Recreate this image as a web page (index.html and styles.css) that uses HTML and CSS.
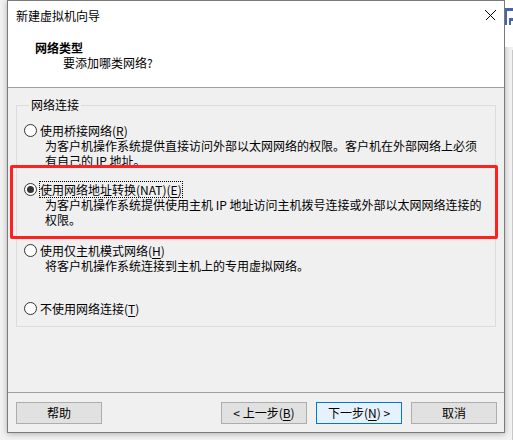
FILE: index.html
```html
<!DOCTYPE html>
<html lang="zh-CN">
<head>
<meta charset="utf-8">
<title>新建虚拟机向导</title>
<link rel="stylesheet" href="styles.css">
</head>
<body>
<div class="desk">
  <div class="window">
    <div class="header">
      <div class="titlebar">
        <span class="title">新建虚拟机向导</span>
        <svg class="close" width="11" height="11" viewBox="0 0 11 11" shape-rendering="crispEdges"><path d="M0.5 0.5L10.5 10.5M10.5 0.5L0.5 10.5" stroke="#000" stroke-width="1" fill="none"/></svg>
      </div>
      <div class="heading">网络类型</div>
      <div class="subheading">要添加哪类网络?</div>
    </div>
    <div class="content">
      <fieldset class="group">
        <legend>网络连接</legend>
        <div class="option o1">
          <div class="row"><span class="radio"></span><span class="label">使用桥接网络(<u>R</u>)</span></div>
          <div class="desc">为客户机操作系统提供直接访问外部以太网网络的权限。客户机在外部网络上必须<br>有自己的 IP 地址。</div>
        </div>
        <div class="option o2">
          <div class="row"><span class="radio checked"></span><span class="label focus">使用网络地址转换(NAT)(<u>E</u>)</span></div>
          <div class="desc">为客户机操作系统提供使用主机 IP 地址访问主机拨号连接或外部以太网网络连接的<br>权限。</div>
        </div>
        <div class="option o3">
          <div class="row"><span class="radio"></span><span class="label">使用仅主机模式网络(<u>H</u>)</span></div>
          <div class="desc">将客户机操作系统连接到主机上的专用虚拟网络。</div>
        </div>
        <div class="option o4">
          <div class="row"><span class="radio"></span><span class="label">不使用网络连接(<u>T</u>)</span></div>
        </div>
      </fieldset>
      <div class="footer">
        <button class="btn help">帮助</button>
        <button class="btn">&lt; 上一步(<u>B</u>)</button>
        <button class="btn default">下一步(<u>N</u>) &gt;</button>
        <button class="btn">取消</button>
      </div>
    </div>
  </div>
  <svg class="side" width="8" height="440" viewBox="0 0 8 440" shape-rendering="crispEdges">
    <rect x="0" y="0" width="8" height="47" fill="#ffffff"/>
    <rect x="0" y="8" width="8" height="3" fill="#4664ad"/>
    <rect x="0" y="8" width="2" height="17" fill="#4664ad"/>
    <rect x="4" y="18" width="4" height="3" fill="#4664ad"/>
    <rect x="4" y="18" width="2" height="7" fill="#4664ad"/>
    <rect x="7" y="50" width="1" height="390" fill="#c8c8c8"/>
  </svg>
  <div class="annot"></div>
</div>
</body>
</html>
```
FILE: styles.css
```css
* { box-sizing: border-box; }
html, body { margin: 0; padding: 0; }
body {
  background: #f2f2f2;
  font-family: "Noto Sans CJK SC", "Noto Sans", sans-serif;
  font-size: 12px;
  color: #000;
  overflow: hidden;
}
.desk {
  position: relative;
  width: 513px;
  height: 440px;
}
.window {
  margin-left: 7px;
  width: 498px;
  height: 433px;
  border: 1px solid #7a7a7a;
  background: #f0f0f0;
  display: flex;
  flex-direction: column;
  box-shadow: 0 1px 6px rgba(0, 0, 0, 0.28);
}
.header {
  height: 87px;
  flex: none;
  background: #fff;
  border-bottom: 1px solid #a0a0a0;
}
.titlebar {
  height: 29px;
  display: flex;
  align-items: center;
  justify-content: space-between;
  padding: 0 8px 0 8px;
  line-height: 29px;
}
.close { display: block; margin-top: -1px; }
.heading {
  margin-top: 10px;
  padding-left: 27px;
  font-weight: bold;
  line-height: 15px;
}
.subheading {
  padding-left: 55px;
  line-height: 15px;
}
.content {
  flex: 1;
  display: flex;
  flex-direction: column;
}
.group {
  margin: 9px 8px 0 8px;
  padding: 10px 0 10px 7px;
  border: 1px solid #dcdcdc;
  min-width: 0;
}
.group legend {
  margin-left: 5px;
  padding: 0 2px;
  line-height: 16px;
}
.option { line-height: 15px; }
.o1 { height: 59px; }
.o2 { height: 61px; }
.o3 { height: 58px; }
.row {
  display: flex;
  align-items: center;
  gap: 3px;
  height: 15px;
}
.radio {
  width: 13px;
  height: 13px;
  flex: none;
  border: 1px solid #333;
  border-radius: 50%;
  background: #fff;
  display: flex;
  align-items: center;
  justify-content: center;
}
.radio.checked::after {
  content: "";
  width: 7px;
  height: 7px;
  border-radius: 50%;
  background: #333;
}
.label { white-space: nowrap; }
.label.focus { outline: 1px dotted #000; outline-offset: 0; }
.desc {
  margin-left: 21px;
  white-space: nowrap;
}
u { text-decoration: underline; text-underline-offset: 2px; }
.footer {
  margin-top: auto;
  flex: none;
  border-top: 1px solid #a0a0a0;
  padding: 9px 7px 8px 8px;
  display: flex;
  gap: 9px;
}
.btn {
  width: 86px;
  height: 22px;
  padding: 0;
  margin: 0;
  font: inherit;
  line-height: 20px;
  color: #000;
  text-align: center;
  background: #e1e1e1;
  border: 1px solid #adadad;
  border-radius: 0;
}
.btn.help { margin-right: auto; }
.btn.default {
  background: #e5f1fb;
  border-color: #0078d7;
}
.side {
  position: absolute;
  left: 505px;
  top: 0;
}
.annot {
  position: absolute;
  left: 10px;
  top: 165px;
  width: 488px;
  height: 74px;
  border: 3px solid #ff2020;
  border-radius: 2px;
}
```
